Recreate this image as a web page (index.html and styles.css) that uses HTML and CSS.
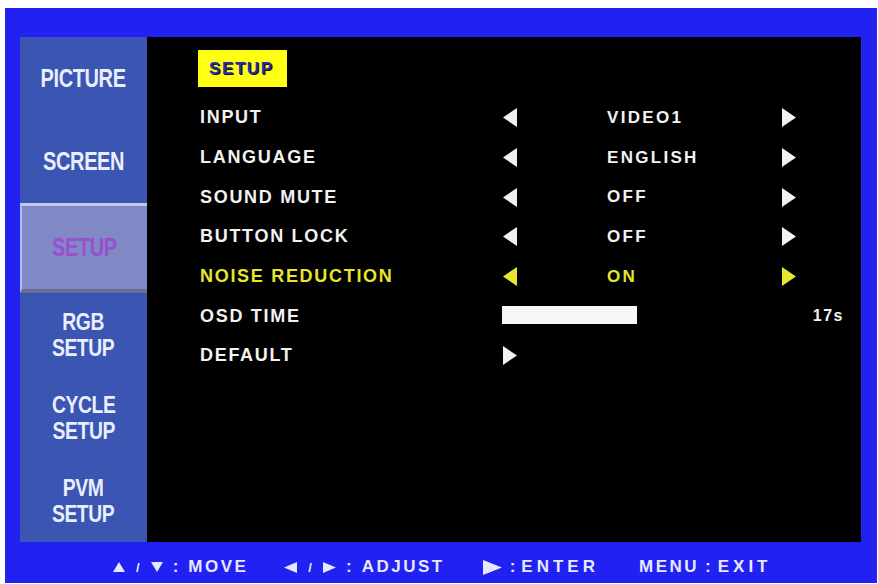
FILE: index.html
```html
<!DOCTYPE html>
<html>
<head>
<meta charset="utf-8">
<link rel="stylesheet" href="styles.css">
</head>
<body>
<div class="frame">
  <div class="screen">
    <nav class="sidebar">
      <div class="tab"><span class="tab-text">PICTURE</span></div>
      <div class="tab"><span class="tab-text">SCREEN</span></div>
      <div class="tab tab-active"><span class="tab-text">SETUP</span></div>
      <div class="tab"><span class="tab-text tab-two">RGB<br>SETUP</span></div>
      <div class="tab"><span class="tab-text tab-two">CYCLE<br>SETUP</span></div>
      <div class="tab"><span class="tab-text tab-two">PVM<br>SETUP</span></div>
    </nav>
    <main class="panel">
      <div class="badge">SETUP</div>
      <div class="rows">
        <div class="row">
          <span class="label">INPUT</span>
          <svg class="arrow" viewBox="0 0 14 19"><polygon points="14,0 14,19 0,9.5"/></svg>
          <span class="value">VIDEO1</span>
          <svg class="arrow" viewBox="0 0 14 19"><polygon points="0,0 0,19 14,9.5"/></svg>
          <span></span>
        </div>
        <div class="row">
          <span class="label">LANGUAGE</span>
          <svg class="arrow" viewBox="0 0 14 19"><polygon points="14,0 14,19 0,9.5"/></svg>
          <span class="value">ENGLISH</span>
          <svg class="arrow" viewBox="0 0 14 19"><polygon points="0,0 0,19 14,9.5"/></svg>
          <span></span>
        </div>
        <div class="row">
          <span class="label">SOUND MUTE</span>
          <svg class="arrow" viewBox="0 0 14 19"><polygon points="14,0 14,19 0,9.5"/></svg>
          <span class="value">OFF</span>
          <svg class="arrow" viewBox="0 0 14 19"><polygon points="0,0 0,19 14,9.5"/></svg>
          <span></span>
        </div>
        <div class="row">
          <span class="label">BUTTON LOCK</span>
          <svg class="arrow" viewBox="0 0 14 19"><polygon points="14,0 14,19 0,9.5"/></svg>
          <span class="value">OFF</span>
          <svg class="arrow" viewBox="0 0 14 19"><polygon points="0,0 0,19 14,9.5"/></svg>
          <span></span>
        </div>
        <div class="row row-active">
          <span class="label">NOISE REDUCTION</span>
          <svg class="arrow" viewBox="0 0 14 19"><polygon points="14,0 14,19 0,9.5"/></svg>
          <span class="value">ON</span>
          <svg class="arrow" viewBox="0 0 14 19"><polygon points="0,0 0,19 14,9.5"/></svg>
          <span></span>
        </div>
        <div class="row">
          <span class="label">OSD TIME</span>
          <div class="bar"></div>
          <span class="time">17s</span>
        </div>
        <div class="row">
          <span class="label">DEFAULT</span>
          <svg class="arrow" viewBox="0 0 14 19"><polygon points="0,0 0,19 14,9.5"/></svg>
        </div>
      </div>
    </main>
  </div>
  <footer class="hints">
    <div class="hint hint-move">
      <svg class="tri-sm" viewBox="0 0 12 10"><polygon points="6,0 12,10 0,10"/></svg>
      <span class="slash">/</span>
      <svg class="tri-sm" viewBox="0 0 12 10"><polygon points="0,0 12,0 6,10"/></svg>
      <span class="colon">:</span>
      <span class="word">MOVE</span>
    </div>
    <div class="hint hint-adjust">
      <svg class="tri-side" viewBox="0 0 13 11"><polygon points="13,0 13,11 0,5.5"/></svg>
      <span class="slash">/</span>
      <svg class="tri-side" viewBox="0 0 13 11"><polygon points="0,0 0,11 13,5.5"/></svg>
      <span class="colon">:</span>
      <span class="word">ADJUST</span>
    </div>
    <div class="hint hint-enter">
      <svg class="tri-big" viewBox="0 0 19 15"><polygon points="0,0 0,15 19,7.5"/></svg>
      <span class="colon colon-tight">:</span>
      <span class="word word-wide">ENTER</span>
    </div>
    <div class="hint hint-exit">
      <span class="word">MENU</span>
      <span class="colon colon-mid">:</span>
      <span class="word word-wide">EXIT</span>
    </div>
  </footer>
</div>
</body>
</html>
```

FILE: styles.css
```css
html, body {
  margin: 0;
  padding: 0;
  background: #ffffff;
}

body {
  width: 878px;
  height: 584px;
  overflow: hidden;
  font-family: "Liberation Sans", Arial, sans-serif;
  font-weight: bold;
}

.frame {
  margin: 8px 0 0 5px;
  width: 872px;
  height: 575px;
  background: #2121f2;
  display: flex;
  flex-direction: column;
  padding-top: 29px;
  box-sizing: border-box;
}

.screen {
  display: flex;
  height: 505px;
  margin: 0 16px 0 15px;
}

/* ---------- sidebar ---------- */
.sidebar {
  width: 127px;
  background: #3a55b2;
  display: flex;
  flex-direction: column;
}

.tab {
  flex: 1;
  display: flex;
  align-items: center;
  justify-content: center;
  color: #e9eefc;
  box-sizing: border-box;
}

.tab-text {
  display: inline-block;
  font-size: 25px;
  line-height: 29px;
  text-align: center;
  letter-spacing: -0.5px;
  transform: scaleX(0.8);
}

.tab-two {
  font-size: 23px;
  line-height: 26px;
  transform: scaleX(0.84);
}

.tab-active {
  background: #8088c6;
  border-top: 3px solid #c3caf2;
  border-left: 2px solid #b3bbec;
  border-bottom: 4px solid #6c6c92;
  color: #9a4fcf;
}

/* ---------- main panel ---------- */
.panel {
  flex: 1;
  background: #000000;
  padding: 13px 0 0 51px;
}

.badge {
  width: 89px;
  height: 37px;
  box-sizing: border-box;
  background: #ffff14;
  color: #2b2ba8;
  font-size: 17px;
  letter-spacing: 1.6px;
  line-height: 37px;
  padding-left: 11px;
  text-shadow: 1px 1px 0 #111;
}

.rows {
  margin-top: 11px;
  padding-left: 2px;
}

.row {
  display: grid;
  grid-template-columns: 303px 104px 175px 26px 1fr;
  align-items: center;
  height: 39.7px;
  color: #f2f2f2;
  fill: #f2f2f2;
}

.label {
  font-size: 18px;
  letter-spacing: 1.7px;
}

.value {
  font-size: 17px;
  letter-spacing: 2.3px;
}

.arrow {
  width: 14px;
  height: 19px;
  display: block;
}

.row-active {
  color: #e6e62c;
  fill: #e6e62c;
}

.bar {
  grid-column: 2 / 4;
  width: 135px;
  height: 18px;
  margin-left: -1px;
  background: #f7f7f7;
  margin-top: -2px;
}

.time {
  grid-column: 4 / 6;
  justify-self: end;
  margin-right: 17px;
  font-size: 16px;
  letter-spacing: 1.5px;
}

/* ---------- footer hints ---------- */
.hints {
  flex: 1;
  display: flex;
  align-items: center;
  padding: 9px 0 0 108px;
  color: #e6e8ff;
  fill: #e6e8ff;
  font-size: 17px;
  letter-spacing: 2.5px;
}

.hint {
  display: flex;
  align-items: center;
}

.hint-move { margin-right: 36px; }
.hint-adjust { margin-right: 38px; }
.hint-enter { margin-right: 40px; }

.tri-sm {
  width: 12px;
  height: 10px;
  display: block;
}

.tri-side {
  width: 13px;
  height: 11px;
  display: block;
}

.tri-big {
  width: 19px;
  height: 15px;
  display: block;
}

.slash {
  margin: 0 11px;
  font-size: 13px;
  letter-spacing: 0;
}

.colon {
  margin: 0 10px;
  letter-spacing: 0;
}

.colon-tight {
  margin: 0 6px 0 8px;
}

.colon-mid {
  margin: 0 7px 0 6px;
}

.word-wide {
  letter-spacing: 4px;
}
```
